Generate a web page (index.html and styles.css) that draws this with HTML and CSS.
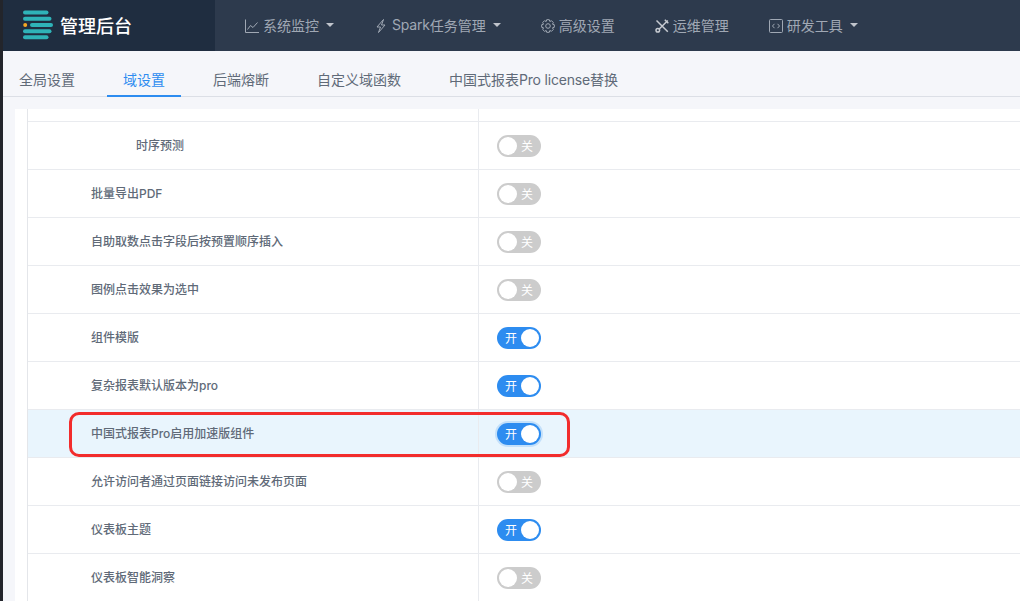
FILE: index.html
```html
<!DOCTYPE html>
<html lang="zh">
<head>
<meta charset="utf-8">
<title>管理后台</title>
<link rel="stylesheet" href="styles.css">
</head>
<body>
<div class="window">
  <header class="topbar">
    <div class="brand">
      <svg class="logo" width="30" height="30" viewBox="0 0 30 30">
        <g stroke="#2fb3b8" stroke-width="4" stroke-linecap="round">
          <path d="M2 2.500H23.500"/><path d="M2 8.700H26.500"/><path d="M9 15H28"/><path d="M2 21.300H26.500"/><path d="M2 27.300H23.500"/>
        </g>
        <circle cx="2.200" cy="15" r="2" fill="#f5a623"/>
      </svg>
      <span class="brand-name">管理后台</span>
    </div>
    <nav class="menu">
      <a class="menu-item"><svg class="ico" viewBox="0 0 14 14"><path d="M.5 .5V13.500H14M2.500 10.500L5.500 6.500L8 8.500L12.500 3.500"/></svg>系统监控<i class="caret"></i></a>
      <a class="menu-item"><svg class="ico" viewBox="0 0 14 14"><path d="M9.500 .5L3 8H6.500L4.500 13.500L11 6H7.500Z"/></svg><span class="latin">Spark</span>任务管理<i class="caret"></i></a>
      <a class="menu-item"><svg class="ico" viewBox="0 0 14 14"><path d="M5.700 .7H8.300L8.800 2.500L10.500 1.700L12.300 3.500L11.500 5.200L13.300 5.700V8.300L11.500 8.800L12.300 10.500L10.500 12.300L8.800 11.500L8.300 13.300H5.700L5.200 11.500L3.500 12.300L1.700 10.500L2.500 8.800L.7 8.300V5.700L2.500 5.200L1.700 3.500L3.500 1.700L5.200 2.500Z"/><circle cx="7" cy="7" r="2.300"/></svg>高级设置</a>
      <a class="menu-item"><svg class="ico tools" viewBox="0 0 14 14"><path d="M1.500 1.500L12.800 12.800M12.800 1.500L4 10.300M9.800 .8L13.300 4.300"/><circle cx="2.800" cy="11.200" r="1.800"/></svg>运维管理</a>
      <a class="menu-item"><svg class="ico" viewBox="0 0 14 14"><rect x=".5" y=".5" width="13" height="13" rx="1"/><path d="M5.500 4.800L3.500 7L5.500 9.200M8.500 4.800L10.500 7L8.500 9.200"/></svg>研发工具<i class="caret"></i></a>
    </nav>
  </header>
  <div class="tabs">
    <a class="tab">全局设置</a>
    <a class="tab active">域设置</a>
    <a class="tab">后端熔断</a>
    <a class="tab">自定义域函数</a>
    <a class="tab">中国式报表<span class="latin">Pro license</span>替换</a>
  </div>
  <main class="content">
    <div class="card">
      <div class="table">
        <div class="row top"><div class="label"></div><div class="value"></div></div>
        <div class="row"><div class="label sub">时序预测</div><div class="value"><span class="switch off"><b></b><em>关</em></span></div></div>
        <div class="row"><div class="label">批量导出PDF</div><div class="value"><span class="switch off"><b></b><em>关</em></span></div></div>
        <div class="row"><div class="label">自助取数点击字段后按预置顺序插入</div><div class="value"><span class="switch off"><b></b><em>关</em></span></div></div>
        <div class="row"><div class="label">图例点击效果为选中</div><div class="value"><span class="switch off"><b></b><em>关</em></span></div></div>
        <div class="row"><div class="label">组件模版</div><div class="value"><span class="switch on"><em>开</em><b></b></span></div></div>
        <div class="row"><div class="label">复杂报表默认版本为pro</div><div class="value"><span class="switch on"><em>开</em><b></b></span></div></div>
        <div class="row hover"><div class="label">中国式报表Pro启用加速版组件</div><div class="value"><span class="switch on focus"><em>开</em><b></b></span></div><span class="mark"></span></div>
        <div class="row"><div class="label">允许访问者通过页面链接访问未发布页面</div><div class="value"><span class="switch off"><b></b><em>关</em></span></div></div>
        <div class="row"><div class="label">仪表板主题</div><div class="value"><span class="switch on"><em>开</em><b></b></span></div></div>
        <div class="row"><div class="label">仪表板智能洞察</div><div class="value"><span class="switch off"><b></b><em>关</em></span></div></div>
      </div>
    </div>
  </main>
</div>
</body>
</html>
```
FILE: styles.css
```css
* { box-sizing: border-box; }
html, body { margin: 0; height: 100%; overflow: hidden; background: #23252b; }
body { font-family: Inter, "Noto Sans CJK SC", sans-serif; }
.window { margin-left: 3px; height: 601px; display: flex; flex-direction: column; background: #f5f6fa; overflow: hidden; }
.topbar { height: 51px; flex: none; display: flex; background: #2d3a4d; }
.brand { width: 212px; flex: none; display: flex; align-items: center; gap: 7px; padding-left: 20px; background: #1f2d40; }
.logo { flex: none; margin-top: -2px; }
.brand-name { color: #fff; font-size: 18px; font-weight: 500; margin-top: -1px; }
.menu { display: flex; align-items: center; gap: 40px; padding: 0 0 2px 30px; }
.menu-item { display: flex; align-items: center; color: #a0a8b4; font-size: 14px; white-space: nowrap; }
.latin { letter-spacing: -.2px; }
.ico { width: 14px; height: 14px; margin: 2px 4px 0 0; fill: none; stroke: #a0a8b4; stroke-width: 1; }
.ico.tools { stroke: #c6cad1; stroke-width: 1.500; }
.caret { width: 0; height: 0; margin-left: 7px; border: 4px solid transparent; border-top-color: #c0c4cc; border-bottom: 0; }
.tabs { height: 46px; flex: none; display: flex; align-items: stretch; gap: 16px; border-bottom: 1px solid #dcdfe6; }
.tab { display: flex; align-items: center; padding: 12px 16px 0; margin-bottom: -1px; border-bottom: 2px solid transparent; color: #606a78; font-size: 14px; white-space: nowrap; }
.tab.active { color: #2d8cf0; border-bottom-color: #2d8cf0; }
.content { flex: 1; min-height: 0; padding: 12px 0 0 12px; overflow: hidden; }
.card { height: 100%; background: #fff; padding-left: 12px; }
.table { border-left: 1px solid #e4e6ea; }
.row { position: relative; height: 48px; display: flex; border-bottom: 1px solid #e9ebef; }
.row.top { height: 13px; }
.row.hover { background: #e9f5fd; }
.label { width: 451px; flex: none; display: flex; align-items: center; padding: 0 0 2px 63px; border-right: 1px solid #e9ebef; color: #606a78; font-size: 12px; font-weight: 500; }
.label.sub { padding-left: 108px; }
.value { flex: 1; display: flex; align-items: center; padding-left: 18px; }
.switch { width: 44px; height: 22px; padding: 2px; display: flex; align-items: center; justify-content: space-between; border-radius: 11px; font-size: 12px; }
.switch b { width: 18px; height: 18px; border-radius: 50%; background: #fff; }
.switch em { font-style: normal; color: #fff; }
.switch.on { background: #2d8cf0; padding-left: 8px; }
.switch.off { background: #ccc; padding-right: 8px; }
.switch.focus { box-shadow: 0 0 0 2px rgba(45, 140, 240, .2); }
.mark { position: absolute; left: 41px; top: 2px; width: 501px; height: 45px; border: 3px solid #f22c2c; border-radius: 10px; }
```
